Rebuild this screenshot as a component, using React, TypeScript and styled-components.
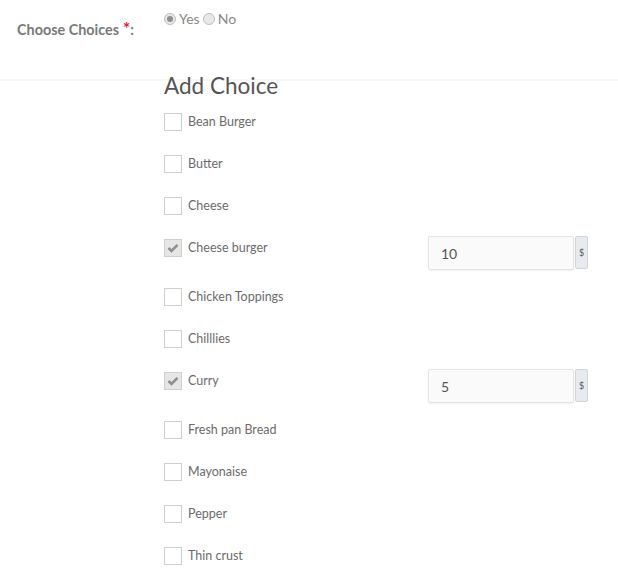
import React from "react";
import styled, { createGlobalStyle } from "styled-components";

const Global = createGlobalStyle`
  html, body { margin: 0; padding: 0; background: #fff; }
  body { font-family: Lato, "Open Sans", "Liberation Sans", sans-serif; }
  * { box-sizing: border-box; }
`;

const Page = styled.div`
  width: 618px;
  min-height: 585px;
  background: #fff;
`;

const TopRow = styled.div`
  display: flex;
  align-items: flex-start;
  height: 81px;
  border-bottom: 2px solid #f7f7f7;
  padding-left: 17px;
`;

const FieldLabel = styled.div`
  width: 147px;
  padding-top: 18px;
  font-size: 14.4px;
  font-weight: 700;
  color: #7a7a7a;
`;

const Star = styled.span`
  color: #e61a1a;
  margin-left: 4px;
  font-size: 17px;
`;

const Radios = styled.div`
  display: flex;
  align-items: center;
  padding-top: 10px;
  font-size: 14px;
  color: #8a8a8a;
`;

const RadioOption = styled.label`
  display: flex;
  align-items: center;
  margin-right: 3px;
`;

const RadioCircle = styled.span<{ $checked?: boolean }>`
  width: 12px;
  height: 12px;
  border-radius: 50%;
  border: 1px solid #bdbdbd;
  background: #e8e8e8;
  display: inline-flex;
  align-items: center;
  justify-content: center;
  margin-right: 3px;
  &::after {
    content: "";
    width: 6px;
    height: 6px;
    border-radius: 50%;
    background: ${(p) => (p.$checked ? "#8d8d8d" : "transparent")};
  }
`;

const Section = styled.div`
  padding: 0 30px 0 164px;
`;

const Heading = styled.h2`
  margin: -9px 0 0 0;
  font-size: 22.5px;
  line-height: 28px;
  font-weight: 400;
  color: #555;
  padding-bottom: 13px;
`;

const List = styled.div`
  display: flex;
  flex-direction: column;
`;

const Row = styled.div<{ $price?: boolean }>`
  display: flex;
  align-items: flex-start;
  height: ${(p) => (p.$price ? 25 : 18)}px;
  margin-bottom: 24px;
`;

const Box = styled.span<{ $checked?: boolean }>`
  width: 18px;
  height: 18px;
  flex: 0 0 18px;
  border: 1px solid #cfcfcf;
  background: ${(p) => (p.$checked ? "#e6e6e6" : "#fff")};
  display: inline-flex;
  align-items: center;
  justify-content: center;
`;

const ItemLabel = styled.span`
  margin-left: 6px;
  font-size: 12.5px;
  line-height: 18px;
  color: #6b6b6b;
`;

const PriceGroup = styled.div`
  margin-left: auto;
  margin-top: -3px;
  display: flex;
  align-items: stretch;
  height: 34px;
`;

const PriceInput = styled.div`
  width: 146px;
  height: 34px;
  border: 1px solid #e4e4e4;
  border-radius: 2px;
  background: #fafafa;
  box-shadow: 0 1px 2px rgba(0, 0, 0, 0.06);
  padding-left: 12px;
  display: flex;
  align-items: center;
  font-size: 14px;
  color: #555;
`;

const Addon = styled.div`
  width: 13px;
  height: 33px;
  margin-left: 1px;
  border: 1px solid #cfd4da;
  border-radius: 2px;
  background: #e7eaee;
  display: flex;
  align-items: center;
  justify-content: center;
  font-size: 9px;
  color: #555;
`;

const Check = () => (
  <svg width="12" height="10" viewBox="0 0 12 10">
    <path d="M1.5 5 L4.5 8 L10.5 1.8" fill="none" stroke="#8f8f8f" strokeWidth="2.6" />
  </svg>
);

const items: { name: string; price?: string }[] = [
  { name: "Bean Burger" },
  { name: "Butter" },
  { name: "Cheese" },
  { name: "Cheese burger", price: "10" },
  { name: "Chicken Toppings" },
  { name: "Chilllies" },
  { name: "Curry", price: "5" },
  { name: "Fresh pan Bread" },
  { name: "Mayonaise" },
  { name: "Pepper" },
  { name: "Thin crust" },
];

export default function App() {
  return (
    <Page>
      <Global />
      <TopRow>
        <FieldLabel>
          Choose Choices<Star>*</Star>:
        </FieldLabel>
        <Radios>
          <RadioOption>
            <RadioCircle $checked />
            Yes
          </RadioOption>
          <RadioOption>
            <RadioCircle />
            No
          </RadioOption>
        </Radios>
      </TopRow>
      <Section>
        <Heading>Add Choice</Heading>
        <List>
          {items.map((it) => (
            <Row key={it.name} $price={!!it.price}>
              <Box $checked={!!it.price}>{it.price ? <Check /> : null}</Box>
              <ItemLabel>{it.name}</ItemLabel>
              {it.price ? (
                <PriceGroup>
                  <PriceInput>{it.price}</PriceInput>
                  <Addon>$</Addon>
                </PriceGroup>
              ) : null}
            </Row>
          ))}
        </List>
      </Section>
    </Page>
  );
}
